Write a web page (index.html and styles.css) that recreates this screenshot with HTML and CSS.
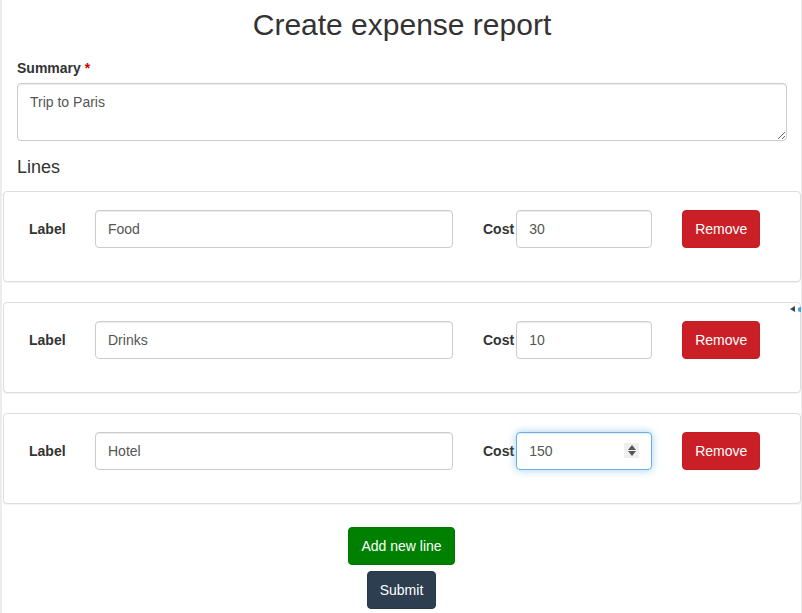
FILE: index.html
```html
<!DOCTYPE html>
<html lang="en">
<head>
<meta charset="utf-8">
<title>Create expense report</title>
<link rel="stylesheet" href="styles.css">
</head>
<body>
<main class="page">
  <h1 class="title">Create expense report</h1>
  <form class="form">
    <label class="field-label" for="summary">Summary <span class="req">*</span></label>
    <textarea id="summary" class="summary">Trip to Paris</textarea>
    <h3 class="lines-title">Lines</h3>

    <div class="lines">
      <div class="line">
        <label class="line-label">Label</label>
        <input class="ctrl ctrl-label" type="text" value="Food">
        <label class="cost-label">Cost</label>
        <div class="cost-wrap"><input class="ctrl ctrl-cost" type="text" value="30"></div>
        <button type="button" class="btn btn-remove">Remove</button>
      </div>

      <div class="line">
        <label class="line-label">Label</label>
        <input class="ctrl ctrl-label" type="text" value="Drinks">
        <label class="cost-label">Cost</label>
        <div class="cost-wrap"><input class="ctrl ctrl-cost" type="text" value="10"></div>
        <button type="button" class="btn btn-remove">Remove</button>
        <span class="marker"><span class="marker-tri"></span><span class="marker-dot"></span></span>
      </div>

      <div class="line">
        <label class="line-label">Label</label>
        <input class="ctrl ctrl-label" type="text" value="Hotel">
        <label class="cost-label">Cost</label>
        <div class="cost-wrap">
          <input class="ctrl ctrl-cost ctrl-focus" type="text" value="150">
          <span class="spinner"><span class="spin-up"></span><span class="spin-down"></span></span>
        </div>
        <button type="button" class="btn btn-remove">Remove</button>
      </div>
    </div>

    <div class="actions">
      <button type="button" class="btn btn-add">Add new line</button>
      <button type="button" class="btn btn-submit">Submit</button>
    </div>
  </form>
</main>
</body>
</html>
```

FILE: styles.css
```css
html, body {
  margin: 0;
  padding: 0;
}
body {
  background: #ececec;
  font-family: "Liberation Sans", Arial, Helvetica, sans-serif;
  font-size: 14px;
  line-height: 20px;
  color: #333;
}
.page {
  background: #fff;
  margin-left: 2px;
  width: 799px;
  min-height: 613px;
  box-sizing: border-box;
  padding: 0 0 0 1px;
  overflow: hidden;
}
.title {
  margin: 8px 0 0;
  font-size: 30px;
  line-height: 33px;
  font-weight: normal;
  text-align: center;
  color: #333;
}
.form {
  display: flex;
  flex-direction: column;
}
.field-label {
  display: block;
  margin: 17px 0 5px 14px;
  font-weight: bold;
  color: #333;
}
.req {
  color: #c00;
}
.summary {
  display: block;
  margin: 0 0 0 14px;
  width: 770px;
  height: 58px;
  box-sizing: border-box;
  padding: 8px 12px;
  border: 1px solid #ccc;
  border-radius: 4px;
  font-family: inherit;
  font-size: 14px;
  line-height: 20px;
  color: #555;
  resize: vertical;
  box-shadow: inset 0 1px 1px rgba(0,0,0,.075);
}
.lines-title {
  margin: 16px 0 14px 14px;
  font-size: 18px;
  line-height: 20px;
  font-weight: normal;
  color: #333;
}
.lines {
  display: flex;
  flex-direction: column;
  gap: 20px;
}
.line {
  position: relative;
  display: flex;
  align-items: center;
  width: 798px;
  height: 91px;
  box-sizing: border-box;
  padding: 0 0 15px 25px;
  border: 1px solid #ddd;
  border-radius: 4px;
  background: #fff;
  box-shadow: 0 1px 1px rgba(0,0,0,.05);
}
.line-label {
  width: 66px;
  font-weight: bold;
}
.cost-label {
  margin: 0 2px 0 30px;
  font-weight: bold;
}
.ctrl {
  display: block;
  height: 38px;
  box-sizing: border-box;
  padding: 8px 12px;
  border: 1px solid #ccc;
  border-radius: 4px;
  font-family: inherit;
  font-size: 14px;
  line-height: 20px;
  color: #555;
  background: #fff;
  box-shadow: inset 0 1px 1px rgba(0,0,0,.075);
  outline: none;
}
.ctrl-label {
  width: 358px;
}
.cost-wrap {
  position: relative;
}
.ctrl-cost {
  width: 136px;
}
.ctrl-focus {
  border-color: #66afe9;
  box-shadow: inset 0 1px 1px rgba(0,0,0,.075), 0 0 8px rgba(102,175,233,.6);
}
.spinner {
  position: absolute;
  left: 108px;
  top: 11px;
  width: 15px;
  height: 15px;
  background: #efefef;
  display: flex;
  flex-direction: column;
  align-items: center;
  justify-content: center;
  gap: 1px;
}
.spin-up, .spin-down {
  width: 0;
  height: 0;
  border-left: 4px solid transparent;
  border-right: 4px solid transparent;
}
.spin-up {
  border-bottom: 5px solid #555;
}
.spin-down {
  border-top: 5px solid #555;
}
.btn {
  height: 38px;
  box-sizing: border-box;
  padding: 8px 12px;
  border: 1px solid transparent;
  border-radius: 4px;
  font-family: inherit;
  font-size: 14px;
  line-height: 20px;
  color: #fff;
  cursor: pointer;
}
.btn-remove {
  margin-left: 30px;
  background: #ca1f26;
  border-color: #c41d24;
}
.marker {
  position: absolute;
  right: -3px;
  top: 3px;
  display: flex;
  align-items: center;
  gap: 3px;
}
.marker-tri {
  width: 0;
  height: 0;
  border-top: 3px solid transparent;
  border-bottom: 3px solid transparent;
  border-right: 5px solid #444;
}
.marker-dot {
  width: 5px;
  height: 5px;
  border-radius: 50%;
  background: #3aa0e8;
}
.actions {
  display: flex;
  flex-direction: column;
  align-items: center;
  gap: 6px;
  margin-top: 23px;
  padding-right: 1px;
}
.btn-add {
  background: #008000;
  border-color: #007500;
}
.btn-submit {
  background: #2c3e50;
  border-color: #283848;
}
```
